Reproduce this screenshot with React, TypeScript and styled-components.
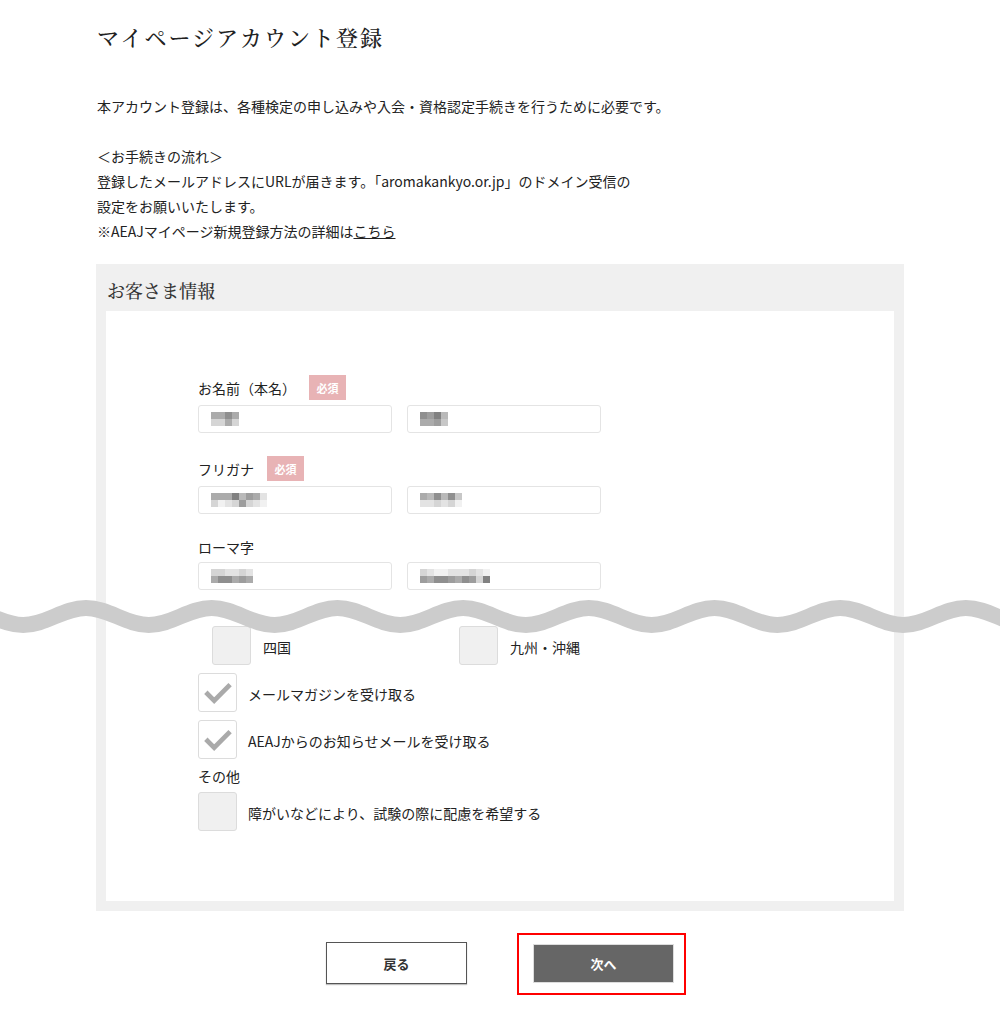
import { FunctionComponent } from "react";
import styled, { createGlobalStyle } from "styled-components";

const GlobalStyle = createGlobalStyle`
  html, body {
    margin: 0;
    padding: 0;
    background: #fff;
  }
  body {
    font-family: "Noto Sans CJK JP", "Noto Sans", sans-serif;
    color: #222;
  }
`;

// shade digits 0-9 -> gray lightness, each string is one row of the mosaic
const shade = (d: string) => `hsl(0, 0%, ${45 + Number(d) * 5.5}%)`;

const masks = {
  lastName: ["4424", "7747"],
  firstName: ["2315", "4436"],
  kanaLast: ["44415348", "79873789"],
  kanaFirst: ["452526", "887879"],
  romaLast: ["778878", "422434"],
  romaFirst: ["7899888789", "3422342371"],
};

const Mosaic: FunctionComponent<{ rows: string[] }> = ({ rows }) => (
  <MosaicGrid>
    {rows[0].split("").map((_, col) =>
      rows.map((row, r) => <MosaicCell key={`${col}-${r}`} $c={shade(row[col])} />)
    )}
  </MosaicGrid>
);

const Check = () => (
  <CheckMark viewBox="0 0 39 39">
    <polyline points="9,21 16,28 31,13" />
  </CheckMark>
);

const Wave = () => {
  const period = 125.7;
  const h = period / 2;
  const top = 12;
  const bot = 29;
  let x = 86 - period * 2;
  let d = `M ${x} ${top}`;
  let up = true;
  while (x < 1100) {
    const from = up ? top : bot;
    const to = up ? bot : top;
    d += ` C ${x + h * 0.3642} ${from}, ${x + h * 0.6358} ${to}, ${x + h} ${to}`;
    x += h;
    up = !up;
  }
  return (
    <WaveSvg viewBox="0 0 1000 40" preserveAspectRatio="none">
      <path d={d} />
    </WaveSvg>
  );
};

const App = () => {
  return (
    <Root>
      <GlobalStyle />
      <Main>
        <Title>マイページアカウント登録</Title>
        <Intro>
          <p>本アカウント登録は、各種検定の申し込みや入会・資格認定手続きを行うために必要です。</p>
          <p>&nbsp;</p>
          <p>＜お手続きの流れ＞</p>
          <p>登録したメールアドレスにURLが届きます。「aromakankyo.or.jp」のドメイン受信の</p>
          <p>設定をお願いいたします。</p>
          <p>
            ※AEAJマイページ新規登録方法の詳細は<Link href="#">こちら</Link>
          </p>
        </Intro>

        <Panel>
          <PanelHeader>お客さま情報</PanelHeader>
          <WhiteBox>
            <FieldGroup>
              <LabelRow>
                お名前（本名）<Badge>必須</Badge>
              </LabelRow>
              <InputRow>
                <Field>
                  <Mosaic rows={masks.lastName} />
                </Field>
                <Field>
                  <Mosaic rows={masks.firstName} />
                </Field>
              </InputRow>
            </FieldGroup>
            <FieldGroup>
              <LabelRow>
                フリガナ<Badge>必須</Badge>
              </LabelRow>
              <InputRow>
                <Field>
                  <Mosaic rows={masks.kanaLast} />
                </Field>
                <Field>
                  <Mosaic rows={masks.kanaFirst} />
                </Field>
              </InputRow>
            </FieldGroup>
            <FieldGroup>
              <LabelRow>ローマ字</LabelRow>
              <InputRow>
                <Field>
                  <Mosaic rows={masks.romaLast} />
                </Field>
                <Field>
                  <Mosaic rows={masks.romaFirst} />
                </Field>
              </InputRow>
            </FieldGroup>

            {/* omitted part of the form, marked by the wave */}
            <Cut />

            <RegionGrid>
              <CheckItem>
                <Box />
                四国
              </CheckItem>
              <CheckItem>
                <Box />
                九州・沖縄
              </CheckItem>
            </RegionGrid>
            <CheckList>
              <CheckItem $gap={11}>
                <Box $checked>
                  <Check />
                </Box>
                メールマガジンを受け取る
              </CheckItem>
              <CheckItem $gap={11}>
                <Box $checked>
                  <Check />
                </Box>
                AEAJからのお知らせメールを受け取る
              </CheckItem>
            </CheckList>
            <SubLabel>その他</SubLabel>
            <CheckItem $gap={11}>
              <Box />
              障がいなどにより、試験の際に配慮を希望する
            </CheckItem>
          </WhiteBox>
        </Panel>

        <ButtonRow>
          <BackButton>戻る</BackButton>
          <Highlight>
            <NextButton>次へ</NextButton>
          </Highlight>
        </ButtonRow>
      </Main>
      <Wave />
    </Root>
  );
};

const Root = styled.div`
  position: relative;
  min-height: 1014px;
  overflow: hidden;
`;

const Main = styled.div`
  width: 808px;
  margin: 0 auto;
  padding: 22px 0 20px;
`;

const Title = styled.h1`
  margin: 0;
  padding-left: 1px;
  font-family: "Noto Serif CJK JP", "Noto Sans CJK JP", serif;
  font-size: 22px;
  font-weight: 500;
  line-height: 30px;
  letter-spacing: 2px;
  color: #222;
`;

const Intro = styled.div`
  margin-top: 42px;
  padding-left: 1px;
  font-size: 14px;
  line-height: 25px;

  p {
    margin: 0;
  }
`;

const Link = styled.a`
  color: #222;
  text-decoration: underline;
`;

const Panel = styled.section`
  margin-top: 20px;
  background: #f0f0f0;
  padding: 0 10px 10px;
`;

const PanelHeader = styled.h2`
  margin: 0;
  box-sizing: border-box;
  height: 47px;
  padding: 4px 0 0 1px;
  display: flex;
  align-items: center;
  font-family: "Noto Serif CJK JP", "Noto Sans CJK JP", serif;
  font-size: 18px;
  font-weight: 500;
  color: #333;
`;

const WhiteBox = styled.div`
  background: #fff;
  padding: 64px 0 70px 92px;
`;

const FieldGroup = styled.div`
  & + & {
    margin-top: 23px;
  }
`;

const LabelRow = styled.div`
  display: flex;
  align-items: center;
  gap: 13px;
  min-height: 20px;
  line-height: 20px;
  margin-bottom: 5px;
  font-size: 14px;
`;

const Badge = styled.span`
  width: 37px;
  height: 25px;
  display: flex;
  align-items: center;
  justify-content: center;
  background: #e8b3b5;
  color: #fff;
  font-size: 11px;
  font-weight: 700;
`;

const InputRow = styled.div`
  display: flex;
  gap: 15px;
`;

const Field = styled.div`
  box-sizing: border-box;
  width: 194px;
  height: 28px;
  padding: 0 12px;
  display: flex;
  align-items: center;
  border: 1px solid #e4e4e4;
  border-radius: 3px;
  background: #fff;
`;

const MosaicGrid = styled.span`
  display: grid;
  grid-template-rows: 7px 7px;
  grid-auto-flow: column;
  grid-auto-columns: 7px;
`;

const MosaicCell = styled.span<{ $c: string }>`
  background: ${(p) => p.$c};
`;

const Cut = styled.div`
  height: 36px;
`;

const RegionGrid = styled.div`
  display: grid;
  grid-template-columns: 247px 247px;
  padding-left: 14px;
`;

const CheckList = styled.div`
  display: flex;
  flex-direction: column;
  gap: 8px;
  margin-top: 8px;
`;

const CheckItem = styled.label<{ $gap?: number }>`
  display: flex;
  align-items: center;
  gap: ${(p) => p.$gap ?? 12}px;
  font-size: 14px;
  line-height: 20px;
  padding-top: 2px;
`;

const Box = styled.span<{ $checked?: boolean }>`
  box-sizing: border-box;
  width: 39px;
  height: 39px;
  margin-top: -2px;
  flex: none;
  border: 1px solid #dcdcdc;
  border-radius: 3px;
  background: ${(p) => (p.$checked ? "#fff" : "#f0f0f0")};
  display: flex;
`;

const CheckMark = styled.svg`
  width: 37px;
  height: 37px;

  polyline {
    fill: none;
    stroke: #aaa;
    stroke-width: 5;
    stroke-linecap: square;
  }
`;

const SubLabel = styled.div`
  margin: 7px 0 6px;
  font-size: 14px;
  line-height: 20px;
`;

const ButtonRow = styled.div`
  margin-top: 31px;
  display: flex;
  justify-content: center;
  align-items: center;
  gap: 66px;
`;

const BackButton = styled.button`
  box-sizing: border-box;
  width: 141px;
  height: 42px;
  background: #fff;
  border: 1px solid #555;
  box-shadow: 0 1px 1px rgba(0, 0, 0, 0.25);
  font-family: "Noto Sans CJK JP", sans-serif;
  font-size: 13px;
  font-weight: 700;
  color: #333;
`;

const Highlight = styled.span`
  position: relative;
  display: flex;

  &::after {
    content: "";
    position: absolute;
    inset: -11px -12px -12px -16px;
    border: 2px solid #f00;
    pointer-events: none;
  }
`;

const NextButton = styled.button`
  box-sizing: border-box;
  width: 141px;
  height: 39px;
  background: #666;
  border: 1px solid #ddd;
  font-family: "Noto Sans CJK JP", sans-serif;
  font-size: 13px;
  font-weight: 700;
  color: #fff;
`;

const WaveSvg = styled.svg`
  position: absolute;
  top: 596px;
  left: 0;
  width: 100%;
  height: 40px;
  pointer-events: none;

  path {
    fill: none;
    stroke: #ccc;
    stroke-width: 16;
  }
`;

export default App;
